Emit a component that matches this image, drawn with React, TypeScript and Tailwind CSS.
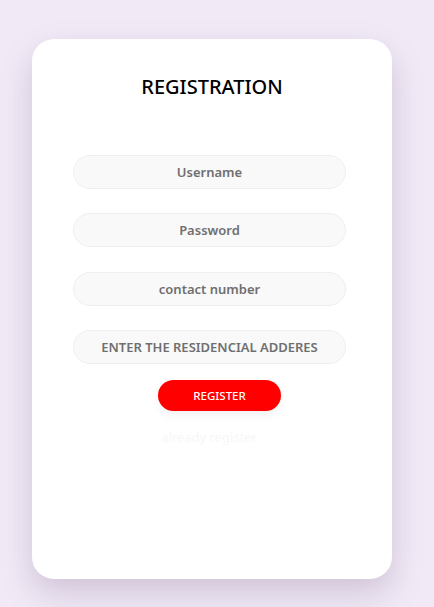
import React from 'react';

const fields = ['Username', 'Password', 'contact number', 'ENTER THE RESIDENCIAL ADDERES'];

export default function App() {
  return (
    <div className="min-h-[607px] w-full bg-[#f1eaf6] pt-[39px] pl-[32px] font-['Noto_Sans',sans-serif]">
      <div className="w-[360px] h-[540px] bg-white rounded-[22px] shadow-[0_14px_32px_rgba(90,60,110,0.22)] pt-[34px] flex flex-col">
        <h1 className="text-center text-[20px] leading-[28px] text-black font-medium">REGISTRATION</h1>
        <form className="mt-[54px] ml-[41px] w-[273px] flex flex-col gap-[24.4px]">
          {fields.map((f) => (
            <input
              key={f}
              placeholder={f}
              className="h-[34px] w-full rounded-full bg-[#f9f9f9] border border-[#efefef] text-center text-[13px] font-semibold placeholder:text-[#6f6f6f] outline-none"
            />
          ))}
        </form>
        <button className="mt-[16px] ml-[126px] w-[123px] h-[31px] rounded-full bg-[#ff0000] text-white text-[11.5px] font-medium shadow-[0_4px_10px_rgba(0,0,0,0.06)]">
          REGISTER
        </button>
        <p className="mt-[17px] text-center text-[13px] text-[#f7f7f7] -ml-[6px]">already register</p>
      </div>
    </div>
  );
}
